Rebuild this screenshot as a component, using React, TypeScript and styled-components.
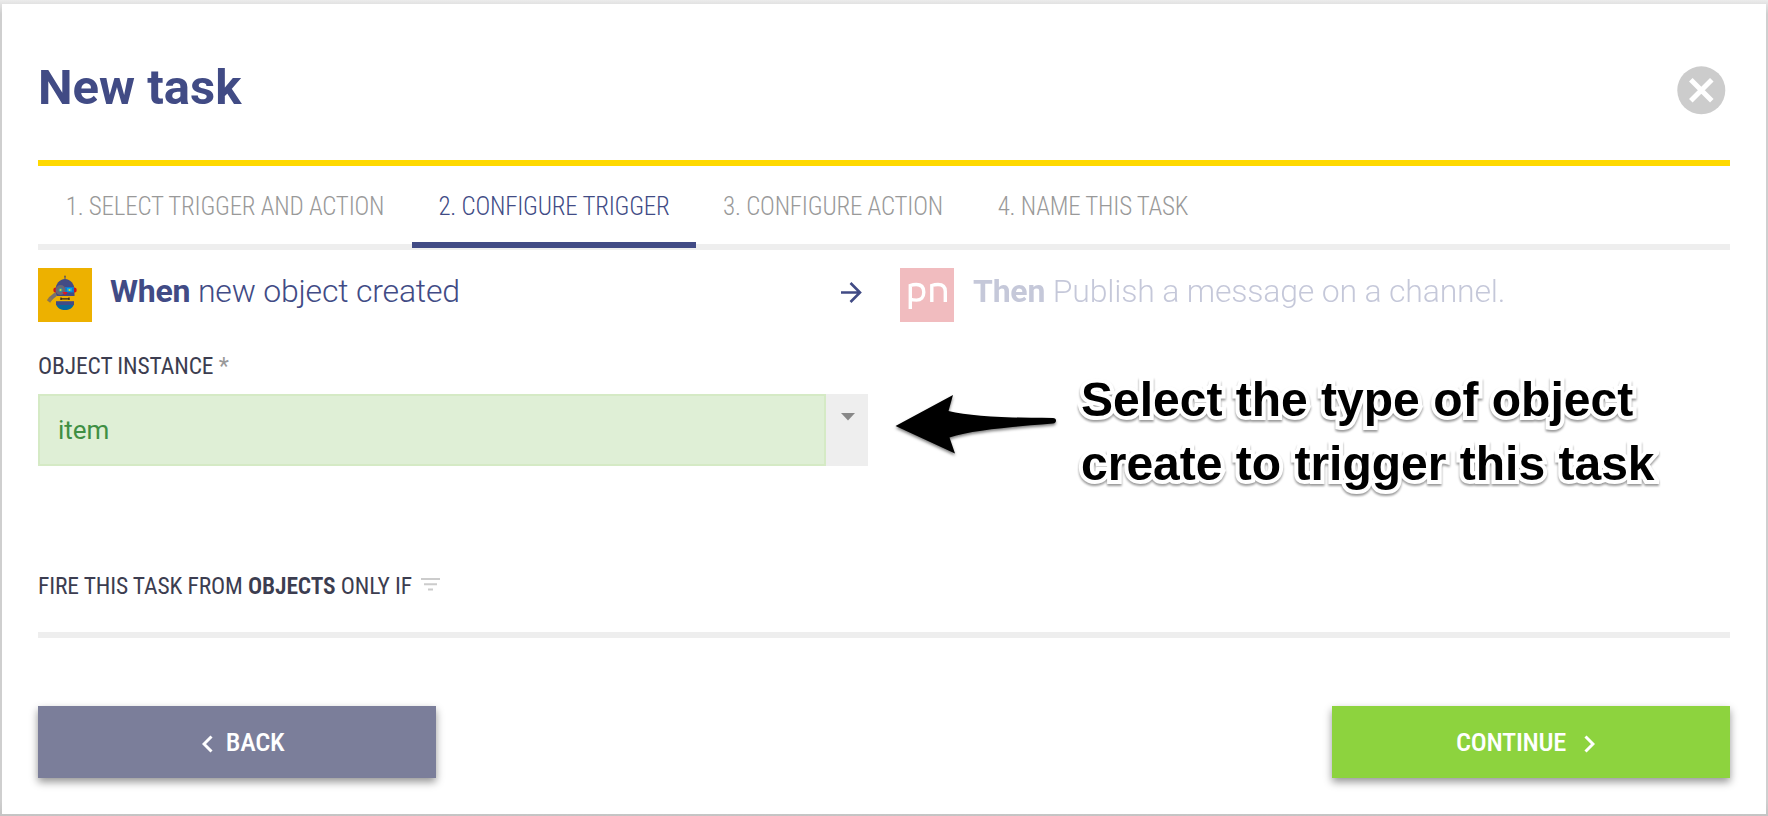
import React from "react";
import styled, { createGlobalStyle, css } from "styled-components";

const navy = "#414b85";

const GlobalStyle = createGlobalStyle`
  * { box-sizing: border-box; }
  body {
    margin: 0;
    background: #cdcdcd;
    font-family: Roboto, "Liberation Sans", sans-serif;
  }
`;

const condensed = css`
  font-family: "Roboto Condensed", Roboto, sans-serif;
  font-stretch: 75%;
  white-space: nowrap;
`;

const Page = styled.div`
  width: 1768px;
  height: 816px;
  padding: 4px 2px 2px;
  overflow: hidden;
  background: linear-gradient(#ececec, #e2e2e2 4px, #cfcfcf 14px, #cfcfcf 800px, #c4c4c4);
`;

const Dialog = styled.main`
  height: 810px;
  padding: 0 36px;
  background: #fff;
  display: flex;
  flex-direction: column;
`;

const Header = styled.header`
  height: 162px;
  padding: 62px 4px 0 0;
  border-bottom: 6px solid #ffd900;
  display: flex;
  align-items: flex-start;
  justify-content: space-between;
`;

const Title = styled.h1`
  margin: -6px 0 0;
  font-size: 49px;
  line-height: 56px;
  font-weight: 700;
  color: ${navy};
`;

const CloseButton = styled.button`
  width: 50px;
  height: 50px;
  padding: 0;
  border: 0;
  background: none;
  svg { display: block; }
`;

const Tabs = styled.nav`
  height: 84px;
  flex: none;
  display: flex;
  border-bottom: 6px solid #eee;
`;

const Tab = styled.a<{ $active?: boolean; $width: number }>`
  ${condensed}
  width: ${(p) => p.$width}px;
  height: 82px;
  padding-top: 24px;
  text-align: center;
  font-size: 25px;
  line-height: 33px;
  font-weight: 360;
  letter-spacing: -0.22px;
  color: ${(p) => (p.$active ? navy : "#999")};
  border-bottom: 6px solid ${(p) => (p.$active ? navy : "transparent")};
`;

const Summary = styled.section`
  height: 54px;
  margin-top: 18px;
  display: flex;
`;

const Step = styled.div<{ $width?: number; $faded?: boolean }>`
  width: ${(p) => (p.$width ? p.$width + "px" : "auto")};
  display: flex;
  gap: ${(p) => (p.$faded ? 19 : 18)}px;
  opacity: ${(p) => (p.$faded ? 0.3 : 1)};
`;

const StepText = styled.p`
  margin: 0;
  font-size: 32px;
  line-height: 46px;
  font-weight: 335;
  letter-spacing: -0.2px;
  white-space: nowrap;
  color: ${navy};
  b { font-weight: 750; }
`;

const ArrowSlot = styled.div`
  width: 60px;
  padding-top: 14px;
  svg { display: block; }
`;

const PnLogo = styled.div`
  width: 54px;
  height: 54px;
  background: #d22630;
  svg { display: block; }
`;

const Config = styled.section`
  display: flex;
  height: 222px;
  padding-top: 30px;
`;

const Field = styled.div`
  width: 830px;
`;

const Label = styled.div`
  ${condensed}
  font-size: 23.5px;
  letter-spacing: -0.12px;
  line-height: 29px;
  color: #3c3d50;
  span { color: #999; }
  b { font-weight: 600; }
`;

const Select = styled.div`
  height: 72px;
  margin-top: 13px;
  display: flex;
`;

const SelectValue = styled.div`
  flex: 1;
  padding: 0 18px;
  border: 2px solid #d5eac5;
  background: #dfefd6;
  font-size: 26px;
  line-height: 68px;
  color: #3f8f44;
`;

const SelectToggle = styled.div`
  width: 42px;
  padding: 19px 0 0 15px;
  background: #eee;
  svg { display: block; }
`;

const Callout = styled.aside`
  display: flex;
  padding: 16px 0 0 24px;
  svg { display: block; flex: none; margin-top: 26px; }
`;

const CalloutText = styled.p`
  margin: 0 0 0 21px;
  font: 700 48px/64px "Liberation Sans", Arial, sans-serif;
  color: #000;
  white-space: nowrap;
  paint-order: stroke fill;
  stroke-linejoin: round;
  -webkit-text-stroke: 8px #fff;
  filter: drop-shadow(0 2px 1px rgba(0, 0, 0, 0.4));
`;

const Line = styled.span`
  display: block;
`;

const Condition = styled.section`
  height: 94px;
  padding-top: 28px;
  border-bottom: 6px solid #eee;
  display: flex;
  gap: 9px;
  svg { display: block; margin-top: 6px; }
`;

const Footer = styled.footer`
  margin-top: 68px;
  display: flex;
  justify-content: space-between;
`;

const Button = styled.button<{ $primary?: boolean }>`
  ${condensed}
  width: 398px;
  height: 72px;
  padding: ${(p) => (p.$primary ? "0 11px 1px 0" : "0 0 1px 12px")};
  border: 0;
  display: flex;
  align-items: center;
  justify-content: center;
  gap: ${(p) => (p.$primary ? 18 : 13)}px;
  color: #fff;
  font-size: 26.5px;
  letter-spacing: -0.3px;
  font-weight: 500;
  background: ${(p) => (p.$primary ? "#8dd33e" : "#7b7e9a")};
  box-shadow: 0 4px 8px rgba(0, 0, 0, 0.42);
  svg { margin-top: 4px; }
`;

const RobotLogo = () => (
  <svg width="54" height="54" viewBox="0 0 54 54">
    <path fill="#edb100" d="M0 0h54v54H0z" />
    <path stroke="#6d6253" strokeWidth="1.2" d="M27 8v5" />
    <circle cx="27" cy="8.500" r="1" fill="#6d6253" />
    <path fill="#434b84" d="M17.500 28V22c0-6 4-11 9.500-11s9.500 5 9.500 11v6z" />
    <ellipse cx="17.300" cy="22" rx="2" ry="2.500" fill="#c9151e" />
    <ellipse cx="36.700" cy="22" rx="2" ry="2.500" fill="#c9151e" />
    <path fill="#1479c9" d="M27 19h9v5.500h-9z" />
    <path fill="#08a7e8" d="M29 20h5v3.500h-5z" />
    <path stroke="#77706d" strokeWidth="4" d="M18 26l-6 5" />
    <path stroke="#8a7654" strokeWidth="4" d="M13 30l-2.500 3.500" />
    <circle cx="22.500" cy="22" r="5" fill="#6b6675" />
    <circle cx="22.500" cy="22" r="2" fill="#299ca9" />
    <circle cx="22.500" cy="22" r="1" fill="#e7d51d" />
    <circle cx="31.500" cy="22" r="1" fill="#e7d51d" />
    <path fill="#df1620" d="M24.500 24h5L28 26.500h-2z" />
    <path stroke="#2a251d" strokeWidth="1.300" fill="none" d="M23 29.500v2.600M31 29.500v2.600M23 30.800h8" />
    <path fill="#414b85" d="M18 33.200h18V37H18z" />
    <path fill="#07689d" d="M18.300 37h17.400c-1.200 3-4.500 5-8.700 5s-7.500-2-8.700-5z" />
  </svg>
);

export default function App() {
  return (
    <>
      <GlobalStyle />
      <Page>
        <Dialog>
          <Header>
            <Title>New task</Title>
            <CloseButton aria-label="Close">
              <svg width="50" height="50" viewBox="0 0 50 50">
                <circle cx="25.300" cy="28.300" r="24" fill="#ccc" transform="translate(0 -4)" />
                <path d="M14.800 13.800l21 21m0-21l-21 21" stroke="#fff" strokeWidth="5" />
              </svg>
            </CloseButton>
          </Header>
          <Tabs>
            <Tab $width={374}>1. SELECT TRIGGER AND ACTION</Tab>
            <Tab $width={284} $active>2. CONFIGURE TRIGGER</Tab>
            <Tab $width={274}>3. CONFIGURE ACTION</Tab>
            <Tab $width={246}>4. NAME THIS TASK</Tab>
          </Tabs>
          <Summary>
            <Step $width={802}>
              <RobotLogo />
              <StepText><b>When</b> new object created</StepText>
            </Step>
            <ArrowSlot>
              <svg width="22" height="22" viewBox="0 0 22 22" fill="none" stroke={navy} strokeWidth="2.600">
                <path d="M1 10.500h19M10.500 1l9.500 9.500-9.500 9.500" />
              </svg>
            </ArrowSlot>
            <Step $faded>
              <PnLogo>
                <svg width="54" height="54" viewBox="0 0 54 54" fill="none" stroke="#fff" strokeWidth="3.400">
                  <path d="M10.300 41V17.500c2-.8 4-1 6-1 5 0 7.500 2.800 7.500 7.700 0 5-2.800 7.900-7.300 7.900-2.200 0-4.200-.3-6.200-1M31.800 34V17.500c2-.7 4-1 6.200-1 5 0 7.300 2.300 7.300 7V34" />
                </svg>
              </PnLogo>
              <StepText><b>Then</b> Publish a message on a channel.</StepText>
            </Step>
          </Summary>
          <Config>
            <Field>
              <Label>OBJECT INSTANCE <span>*</span></Label>
              <Select>
                <SelectValue>item</SelectValue>
                <SelectToggle>
                  <svg width="14" height="8" viewBox="0 0 14 8"><path fill="#888" d="M0 0h14L7 7.500z" /></svg>
                </SelectToggle>
              </Select>
            </Field>
            <Callout>
              <svg width="168" height="66" viewBox="0 0 168 66">
                <path
                  d="M3.500 32L61 1l-4.500 16c22 5.500 62 7 104.500 7q3 0 3 2.500t-3 3C118 33 80 36 57.500 43.500L63 59.500z"
                  filter="drop-shadow(0 2px 1.500px rgba(0,0,0,.5))"
                />
              </svg>
              <CalloutText>
                <Line>Select the type of object</Line>
                <Line>create to trigger this task</Line>
              </CalloutText>
            </Callout>
          </Config>
          <Condition>
            <Label>FIRE THIS TASK FROM <b>OBJECTS</b> ONLY IF</Label>
            <svg width="19" height="14" viewBox="0 0 19 14" fill="#ccc">
              <path d="M0 0h19v2H0zM3 5.200h13v2H3zM7 10.500h5v2H7z" />
            </svg>
          </Condition>
          <Footer>
            <Button>
              <svg width="11" height="18" viewBox="0 0 11 18" fill="none" stroke="#fff" strokeWidth="3"><path d="M9.500 1.500L2 9l7.500 7.500" /></svg>
              BACK
            </Button>
            <Button $primary>
              CONTINUE
              <svg width="11" height="18" viewBox="0 0 11 18" fill="none" stroke="#fff" strokeWidth="3"><path d="M1.500 1.500L9 9l-7.500 7.500" /></svg>
            </Button>
          </Footer>
        </Dialog>
      </Page>
    </>
  );
}
